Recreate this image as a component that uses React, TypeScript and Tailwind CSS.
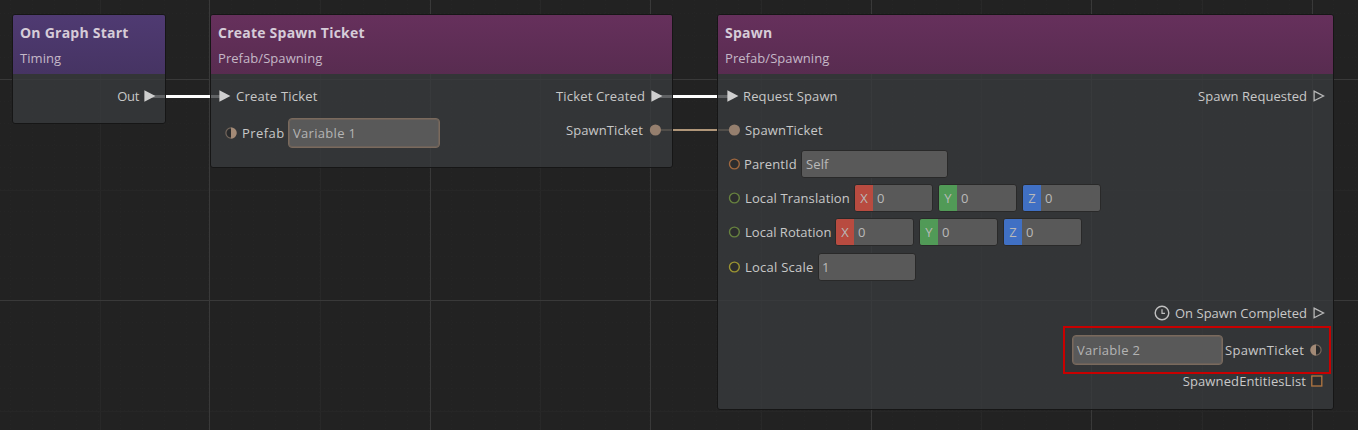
import type { ReactNode } from 'react';

const EXEC = '#cfcfcf';
const TICKET = '#957f6e';

function Grid() {
  const majorX = [209, 430, 650, 871, 1091, 1312];
  const midX = [100, 320, 540, 761, 981, 1202];
  const fineX = Array.from({ length: 63 }, (_, i) => 10.5 + i * 22.05);
  const fineY = Array.from({ length: 20 }, (_, i) => 13.5 + i * 22.05);
  return (
    <svg className="absolute inset-0" width="1358" height="430" shapeRendering="crispEdges">
      {fineX.map((x) => (
        <line key={x} x1={x} x2={x} y1="0" y2="430" stroke="#252525" strokeDasharray="1 3" />
      ))}
      {fineY.map((y) => (
        <line key={y} y1={y} y2={y} x1="0" x2="1358" stroke="#252525" strokeDasharray="1 3" />
      ))}
      {midX.map((x) => (
        <rect key={x} x={x} y="0" width="1" height="430" fill="#282828" />
      ))}
      {[190, 411].map((y) => (
        <rect key={y} x="0" y={y} width="1358" height="1" fill="#262626" />
      ))}
      {majorX.map((x) => (
        <rect key={x} x={x} y="0" width="1" height="430" fill="#393939" />
      ))}
      {[79, 300].map((y) => (
        <rect key={y} x="0" y={y} width="1358" height="1" fill="#393939" />
      ))}
    </svg>
  );
}

function ExecPin({ filled = false }: { filled?: boolean }) {
  return (
    <svg width="12" height="12" viewBox="0 0 12 12" className="shrink-0">
      {filled ? (
        <path d="M.4.3 11.4 6 .4 11.7Z" fill={EXEC} />
      ) : (
        <path d="M1.1 1.2 10.5 6 1.1 10.8Z" fill="none" stroke="#b8b8b8" strokeWidth="1.3" />
      )}
    </svg>
  );
}

function RingPin({ color, filled = false }: { color: string; filled?: boolean }) {
  return (
    <svg width="12" height="12" viewBox="0 0 12 12" className="shrink-0 overflow-visible">
      <circle cx="6.4" cy="6" r={filled ? 5.6 : 4.9} fill={filled ? color : '#2c2d2e'} stroke={filled ? 'none' : color} strokeWidth="1.4" />
    </svg>
  );
}

function HalfPin({ side }: { side: 'left' | 'right' }) {
  return (
    <svg width="12" height="12" viewBox="0 0 12 12" className="shrink-0">
      <circle cx="6" cy="6" r="5.1" fill="#292a2b" stroke="#75675c" strokeWidth="1.2" />
      <path d={side === 'left' ? 'M6 .4A5.6 5.6 0 0 0 6 11.6Z' : 'M6 .4A5.6 5.6 0 0 1 6 11.6Z'} fill="#a38a76" />
    </svg>
  );
}

function ListPin() {
  return (
    <svg width="12" height="12" viewBox="0 0 12 12" className="shrink-0">
      <rect x=".8" y="1" width="10" height="10" fill="#2c2d2e" stroke="#b27742" strokeWidth="1.3" />
    </svg>
  );
}

function Clock() {
  return (
    <svg width="16" height="16" viewBox="0 0 16 16" fill="none" stroke="#c0c0c0" className="shrink-0">
      <circle cx="8" cy="8" r="6.8" strokeWidth="1.4" />
      <path d="M8 4.3V8.3H11" strokeWidth="1.2" />
    </svg>
  );
}

function Field({ width, children }: { width: string; children: ReactNode }) {
  return (
    <div className={`flex h-7 shrink-0 items-center rounded-[3px] border border-[#292929] bg-[#595959] text-[#b9b9b9] ${width}`}>
      {children}
    </div>
  );
}

function VariableField({ width, children }: { width: string; children: ReactNode }) {
  return (
    <div className={`flex h-[30px] shrink-0 items-center rounded-[4px] border border-[#7a6a5d] bg-[#595959] pl-1 tracking-[0.3px] text-[#b4b4b4] shadow-[inset_0_0_0_1px_#6b615a] ${width}`}>
      {children}
    </div>
  );
}

function Axis({ name, color }: { name: string; color: string }) {
  return (
    <div className="flex h-7 w-[79px] overflow-hidden rounded-[3px] border border-[#292929] bg-[#595959] text-[#b9b9b9]">
      <div className={`flex w-[18px] items-center justify-center ${color}`}>{name}</div>
      <div className="flex items-center pl-1">0</div>
    </div>
  );
}

function Vector() {
  return (
    <div className="flex gap-[5px]">
      <Axis name="X" color="bg-[#b84b40]" />
      <Axis name="Y" color="bg-[#519a57]" />
      <Axis name="Z" color="bg-[#4070c4]" />
    </div>
  );
}

function Node({ place, header, title, category, children }: { place: string; header: string; title: string; category: string; children: ReactNode }) {
  return (
    <section className={`absolute flex flex-col overflow-hidden rounded-[3px] border border-[#161616] bg-[#383b3d]/80 ${place}`}>
      <header className={`h-[59px] shrink-0 bg-linear-to-b pt-[9px] pl-[7px] ${header}`}>
        <h2 className="h-[18px] text-sm/[18px] font-bold tracking-[0.23px] text-[#d6ccd8]">{title}</h2>
        <p className="mt-[7px] h-[18px] leading-[18px] tracking-[0.06px] text-[#c5b8c7]">{category}</p>
      </header>
      {children}
    </section>
  );
}

const PREFAB = 'from-[#66305c] to-[#582c50]';

export default function App() {
  return (
    <main className="relative h-[430px] w-[1358px] overflow-hidden bg-[#222222] font-['Open_Sans',sans-serif] text-[13px]/[18px] tracking-[0.12px] whitespace-nowrap text-[#c8c8c8]">
      <Grid />
      <svg className="absolute inset-0" width="1358" height="430">
        <rect x="150" y="95" width="74" height="3" fill="#fff" />
        <rect x="657" y="95" width="73" height="3" fill="#fff" />
        <rect x="660" y="129" width="70" height="2" fill="#b09679" />
      </svg>

      <Node place="left-3 top-3.5 h-[110px] w-[154px]" header="from-[#4f3a72] to-[#463463]" title="On Graph Start" category="Timing">
        <div className="flex h-11 items-center justify-end pr-[9px]">
          <span className="mr-[5px] tracking-[-0.3px]">Out</span>
          <ExecPin filled />
        </div>
      </Node>

      <Node place="left-[210px] top-3.5 h-[154px] w-[463px]" header={PREFAB} title="Create Spawn Ticket" category="Prefab/Spawning">
        <div className="flex justify-between">
          <div>
            <div className="flex h-11 items-center gap-[5px] pl-2">
              <ExecPin filled />
              <span className="tracking-[0.22px]">Create Ticket</span>
            </div>
            <div className="flex h-[30px] items-center pl-[14px]">
              <HalfPin side="right" />
              <span className="ml-[5px] w-[46px] tracking-[0.45px]">Prefab</span>
              <VariableField width="w-[152px]">Variable 1</VariableField>
            </div>
          </div>
          <div className="flex flex-col items-end">
            <div className="flex h-11 items-center gap-[6px] pr-[9px]">
              <span className="tracking-[0.16px]">Ticket Created</span>
              <ExecPin filled />
            </div>
            <div className="flex h-6 items-center gap-[6px] pr-[11px]">
              SpawnTicket <RingPin color={TICKET} filled />
            </div>
          </div>
        </div>
      </Node>

      <Node place="left-[717px] top-3.5 h-[396px] w-[617px]" header={PREFAB} title="Spawn" category="Prefab/Spawning">
        <div className="flex h-11 items-center justify-between pr-2 pl-[9px]">
          <div className="flex items-center gap-1"><ExecPin filled /> Request Spawn</div>
          <div className="flex items-center gap-[6px]">
            <span className="tracking-[0.04px]">Spawn Requested</span>
            <ExecPin />
          </div>
        </div>
        <div className="flex h-6 items-center gap-[5px] pl-[10px]">
          <RingPin color={TICKET} filled />
          <span className="tracking-[0.18px]">SpawnTicket</span>
        </div>
        <div className="flex h-11 items-center pl-[10px]">
          <RingPin color="#a0683f" />
          <span className="ml-1 w-[57px]">ParentId</span>
          <Field width="w-[147px]"><span className="pl-1">Self</span></Field>
        </div>
        <div className="flex h-6 items-center pl-[10px]">
          <RingPin color="#67823f" />
          <span className="ml-[5px] w-[109px]">Local Translation</span>
          <Vector />
        </div>
        <div className="flex h-11 items-center pl-[10px]">
          <RingPin color="#67823f" />
          <span className="ml-[5px] w-[90px] tracking-[0.02px]">Local Rotation</span>
          <Vector />
        </div>
        <div className="flex h-[26px] items-center pl-[10px]">
          <RingPin color="#9c9532" />
          <span className="ml-[5px] w-[73px] tracking-[0.25px]">Local Scale</span>
          <Field width="w-[98px]"><span className="pl-[3px]">1</span></Field>
        </div>
        <div className="mt-5 flex h-[26px] items-center justify-end pr-2">
          <Clock />
          <span className="mr-[6px] ml-[5px] tracking-[0.02px]">On Spawn Completed</span>
          <ExecPin />
        </div>
        <div className="mr-[2px] flex h-12 w-[268px] shrink-0 items-center justify-end self-end border-2 border-[#c80000] pr-[7px]">
          <VariableField width="w-[151px]">Variable 2</VariableField>
          <span className="mr-[5px] ml-[2px] w-[80px] tracking-[0.3px]">SpawnTicket</span>
          <HalfPin side="left" />
        </div>
        <div className="flex h-[14px] items-center justify-end gap-[5px] pr-[10px]">
          SpawnedEntitiesList
          <ListPin />
        </div>
      </Node>
    </main>
  );
}
